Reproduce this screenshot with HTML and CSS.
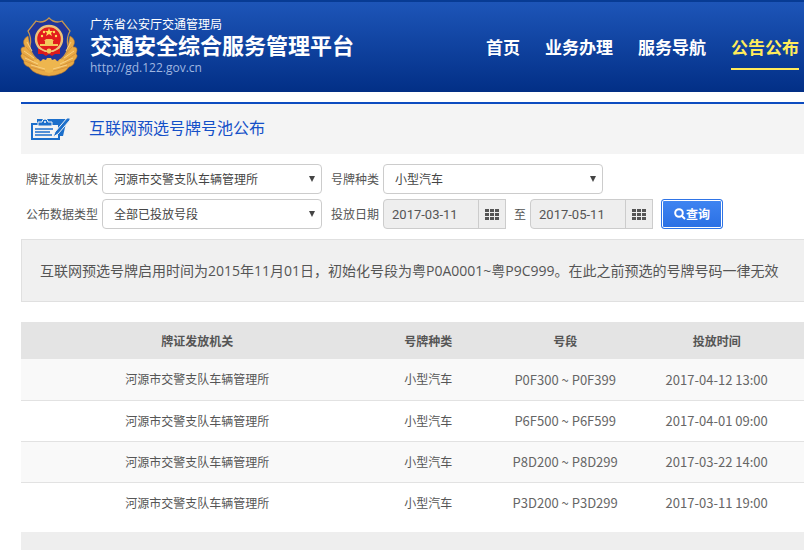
FILE: index.html
```html
<!DOCTYPE html>
<html lang="zh-CN">
<head>
  <meta charset="UTF-8" />
  <meta name="viewport" content="width=device-width, initial-scale=1" />
  <title>互联网预选号牌号池公布</title>
  <link rel="stylesheet" href="styles.css">
</head>
<body>

  <header class="header">
    <svg class="emblem" viewBox="0 0 58 60" aria-hidden="true">
      <g fill="#e9aa45" stroke="#b9772b" stroke-width=".6">
        <path d="M8 19 Q1 23 5 30 Q-1 29 2 37 Q-1 39 4 44 Q3 48 9 50 Q14 58 29 59 Q44 58 49 50 Q55 48 54 44 Q59 39 56 37 Q59 29 53 30 Q57 23 50 19 L47 34 L40 44 L29 48 L18 44 L11 34 Z"/>
      </g>
      <path d="M29 1 Q35 7 42 4 L50 14 Q46 21 48 29 Q47 42 29 49 Q11 42 10 29 Q12 21 8 14 L16 4 Q23 7 29 1 Z" fill="#20369b" stroke="#c9984f" stroke-width="1.3"/>
      <path d="M11 44 L18 42 L20 45 L23 42 L26 43 L27 41 H31 L32 43 L35 42 L38 45 L40 42 L47 44 Q42 53 29 56 Q16 53 11 44 Z" fill="#eeb64e"/>
      <g fill="none" stroke="#cf8c38" stroke-width=".8">
        <path d="M6 30 L13 38 M3 37 L14 44 M5 44 L18 49 M10 50 L25 54 M52 30 L45 38 M55 37 L44 44 M53 44 L40 49 M48 50 L33 54"/>
      </g>
      <g fill="none" stroke="#f9d083" stroke-width="1">
        <path d="M7 25 L12 34 M4 34 L14 41 M5 41 L18 47 M11 48 L25 52 M51 25 L46 34 M54 34 L44 41 M53 41 L40 47 M47 48 L33 52"/>
      </g>
      <path d="M18 31 L23 34 H35 L40 31 L40 37 L35 37 L32 39 L29 37 L26 39 L23 37 L18 37 Z" fill="#dc1b1c"/>
      <circle cx="29" cy="22" r="13" fill="#e21c1d" stroke="#edc27a" stroke-width="2.4"/>
      <path d="M20 27 H38 V29 H20 Z M25 24 H33 V27 H25 Z M24 24 L26 22 H32 L34 24 Z" fill="#f3c85b"/>
      <path d="M19 32 L25 35 H33 L39 32 L39 37 L34 36 H24 L19 37 Z" fill="#dc1b1c"/>
      <circle cx="29" cy="34" r="2.4" fill="#f3c85b"/>
      <path d="M29 11 L30 14 H33 L31 16 L32 19 L29 17 L26 19 L27 16 L25 14 H28 Z" fill="#ffdf5c"/>
      <g fill="#ffdf5c">
        <circle cx="22" cy="19" r="1.2"/><circle cx="24" cy="15" r="1.2"/><circle cx="34" cy="15" r="1.2"/><circle cx="36" cy="19" r="1.2"/>
      </g>
    </svg>
    <div class="brand">
      <p class="brand-dept">广东省公安厅交通管理局</p>
      <h1 class="brand-name">交通安全综合服务管理平台</h1>
      <p class="brand-url">http://gd.122.gov.cn</p>
    </div>
    <nav class="nav">
      <a href="#">首页</a>
      <a href="#">业务办理</a>
      <a href="#">服务导航</a>
      <a href="#" class="active">公告公布</a>
    </nav>
  </header>

  <main class="content">
    <div class="page-title">
      <svg class="title-icon" viewBox="0 0 40 24" aria-hidden="true">
        <path d="M6 2 H36 L32 19 H6 Z" fill="#1c6fcb"/>
        <path d="M1 7 H28 V22 H1 Z" fill="#f4f4f4" stroke="#1c6fcb" stroke-width="2"/>
        <path d="M7 9 V5 H11 Q11 2 14 2 Q17 2 17 5 H21 V9 Z" fill="#1c6fcb" stroke="#f4f4f4"/>
        <circle cx="14" cy="5" r="1" fill="#fff"/>
        <path d="M4 12 H22 M4 15 H19 M4 18 H21" stroke="#1c6fcb" stroke-width="1.4"/>
        <path d="M22 20 L24 15 L36 1 L39 1 L39 3 L27 17 Z" fill="#1c6fcb" stroke="#f4f4f4"/>
      </svg>
      <h2>互联网预选号牌号池公布</h2>
    </div>

    <form class="search">
      <div class="search-row">
        <label for="org">牌证发放机关</label>
        <span class="select">
          <select id="org"><option>河源市交警支队车辆管理所</option></select>
        </span>
        <label for="plateType">号牌种类</label>
        <span class="select">
          <select id="plateType"><option>小型汽车</option></select>
        </span>
      </div>
      <div class="search-row">
        <label for="dataType">公布数据类型</label>
        <span class="select">
          <select id="dataType"><option>全部已投放号段</option></select>
        </span>
        <label for="startDate">投放日期</label>
        <span class="date">
          <input type="text" id="startDate" value="2017-03-11" readonly />
          <button type="button" aria-label="选择开始日期">
            <svg viewBox="0 0 14 11"><path d="M0 0h4v3H0zM5 0h4v3H5zM10 0h4v3h-4zM0 4h4v3H0zM5 4h4v3H5zM10 4h4v3h-4zM0 8h4v3H0zM5 8h4v3H5zM10 8h4v3h-4z"/></svg>
          </button>
        </span>
        <label for="endDate" class="to">至</label>
        <span class="date">
          <input type="text" id="endDate" value="2017-05-11" readonly />
          <button type="button" aria-label="选择结束日期">
            <svg viewBox="0 0 14 11"><path d="M0 0h4v3H0zM5 0h4v3H5zM10 0h4v3h-4zM0 4h4v3H0zM5 4h4v3H5zM10 4h4v3h-4zM0 8h4v3H0zM5 8h4v3H5zM10 8h4v3h-4z"/></svg>
          </button>
        </span>
        <button type="submit" class="btn-query">
          <svg viewBox="0 0 12 12" aria-hidden="true"><circle cx="5" cy="5" r="3.8"/><path d="M8 8 L11 11"/></svg>查询
        </button>
      </div>
    </form>

    <p class="notice">互联网预选号牌启用时间为2015年11月01日，初始化号段为粤P0A0001~粤P9C999。在此之前预选的号牌号码一律无效</p>

    <table class="pool">
      <thead>
        <tr>
          <th>牌证发放机关</th><th>号牌种类</th><th>号段</th><th>投放时间</th>
        </tr>
      </thead>
      <tbody>
        <tr>
          <td>河源市交警支队车辆管理所</td><td>小型汽车</td><td class="num">P0F300 ~ P0F399</td><td class="num">2017-04-12 13:00</td>
        </tr>
        <tr>
          <td>河源市交警支队车辆管理所</td><td>小型汽车</td><td class="num">P6F500 ~ P6F599</td><td class="num">2017-04-01 09:00</td>
        </tr>
        <tr>
          <td>河源市交警支队车辆管理所</td><td>小型汽车</td><td class="num">P8D200 ~ P8D299</td><td class="num">2017-03-22 14:00</td>
        </tr>
        <tr>
          <td>河源市交警支队车辆管理所</td><td>小型汽车</td><td class="num">P3D200 ~ P3D299</td><td class="num">2017-03-11 19:00</td>
        </tr>
      </tbody>
    </table>

    <div class="table-footer"></div>
  </main>

</body>
</html>
```
FILE: styles.css
```css
* {
  box-sizing: border-box;
}

body {
  margin: 0;
  min-height: 100vh;
  display: flex;
  flex-direction: column;
  background: #fff;
  color: #555;
  font-family: "Open Sans", "Noto Sans CJK SC", sans-serif;
  font-size: 12px;
}

h1, h2, p {
  margin: 0;
}

/* 页头 */
.header {
  display: flex;
  align-items: flex-start;
  height: 92px;
  padding: 14px 5px 0 20px;
  border-top: 2px solid #073b94;
  background: linear-gradient(#1d55b8, #022f86);
  color: #fff;
}

.emblem {
  width: 58px;
  height: 62px;
  flex: none;
}

.brand {
  margin-left: 12px;
  white-space: nowrap;
}

.brand-dept {
  line-height: 18px;
}

.brand-name {
  font-size: 22px;
  line-height: 22px;
}

.brand-url {
  margin-top: 4px;
  color: #9fb6e0;
  font-size: 12px;
  line-height: 16px;
}

.nav {
  display: flex;
  gap: 25px;
  margin-left: auto;
  padding-top: 18px;
}

.nav a {
  height: 36px;
  border-bottom: 2px solid transparent;
  color: #fff;
  font-size: 17px;
  font-weight: bold;
  line-height: 28px;
  text-decoration: none;
  white-space: nowrap;
}

.nav a.active {
  border-color: #ffeb5b;
  color: #ffeb5b;
}

.content {
  flex: 1;
  display: flex;
  flex-direction: column;
  margin: 10px 0 0 21px;
}

.page-title {
  display: flex;
  align-items: center;
  gap: 18px;
  height: 52px;
  padding-left: 10px;
  border-top: 2px solid #0c4cc0;
  background: #f4f4f4;
}

.page-title h2 {
  padding-bottom: 5px;
  color: #1450c8;
  font-size: 16px;
  font-weight: normal;
}

.title-icon {
  width: 40px;
  height: 24px;
}

/* 查询表单 */
.search {
  display: flex;
  flex-direction: column;
  gap: 5px;
  padding: 10px 5px;
}

.search-row {
  display: flex;
  align-items: center;
}

.search label {
  margin-right: 4px;
  white-space: nowrap;
}

.select {
  position: relative;
  width: 220px;
  margin-right: 9px;
}

.select::after {
  content: "";
  position: absolute;
  top: 12px;
  right: 7px;
  border: 3px solid transparent;
  border-top: 6px solid #444;
  border-bottom: 0;
  pointer-events: none;
}

.select select {
  appearance: none;
  width: 100%;
  height: 30px;
  padding: 0 11px;
  border: 1px solid #ccc;
  border-radius: 4px;
  background: #fff;
  color: #444;
  font: inherit;
}

.date {
  display: flex;
}

.date input {
  width: 96px;
  height: 30px;
  padding: 0 8px;
  border: 1px solid #ccc;
  border-radius: 4px 0 0 4px;
  background: #eee;
  color: #555;
  font-family: Roboto, Arial, sans-serif;
  font-size: 13px;
}

.date button {
  display: flex;
  align-items: center;
  justify-content: center;
  width: 28px;
  height: 30px;
  margin-left: -1px;
  padding: 0;
  border: 1px solid #ccc;
  background: #eee;
}

.date svg {
  width: 14px;
  height: 11px;
  fill: #555;
}

.search .to {
  margin-left: 8px;
}

.btn-query {
  display: flex;
  align-items: center;
  justify-content: center;
  width: 62px;
  height: 30px;
  margin-left: 8px;
  padding: 0;
  border: 1px solid #2f74e6;
  border-radius: 3px;
  background: linear-gradient(#3f85f2, #2a6fe4);
  box-shadow: inset 0 0 0 1px #fff;
  color: #fff;
  font: inherit;
  font-weight: bold;
}

.btn-query svg {
  width: 12px;
  height: 12px;
  fill: none;
  stroke: #fff;
  stroke-width: 2;
}

.notice {
  padding: 20px 0 20px 18px;
  border: 1px solid #e0e0e0;
  border-right: 0;
  background: #f0f0f0;
  font-size: 14px;
  line-height: 21px;
}

/* 号池列表 */
.pool {
  width: 100%;
  margin-top: 20px;
  border-collapse: collapse;
  table-layout: fixed;
  text-align: center;
}

.pool th {
  height: 37px;
  padding: 0;
  background: #e4e4e4;
}

.pool td {
  height: 41px;
  padding: 0;
  border-bottom: 1px solid #e2e2e2;
}

.pool th:nth-child(1) {
  width: 45%;
}

.pool th:nth-child(2) {
  width: 14%;
}

.pool th:nth-child(3) {
  width: 21%;
}

.pool th:last-child,
.pool td:last-child {
  padding-right: 18px;
}

.pool tbody tr:nth-child(odd) {
  background: #f9f9f9;
}

.pool tbody tr:last-child td {
  border-bottom: 0;
}

.pool .num {
  color: #666;
  font-family: "Noto Sans CJK SC", sans-serif;
  font-size: 13px;
}

.table-footer {
  flex: 1;
  min-height: 18px;
  margin-top: 9px;
  background: #eee;
}
```
